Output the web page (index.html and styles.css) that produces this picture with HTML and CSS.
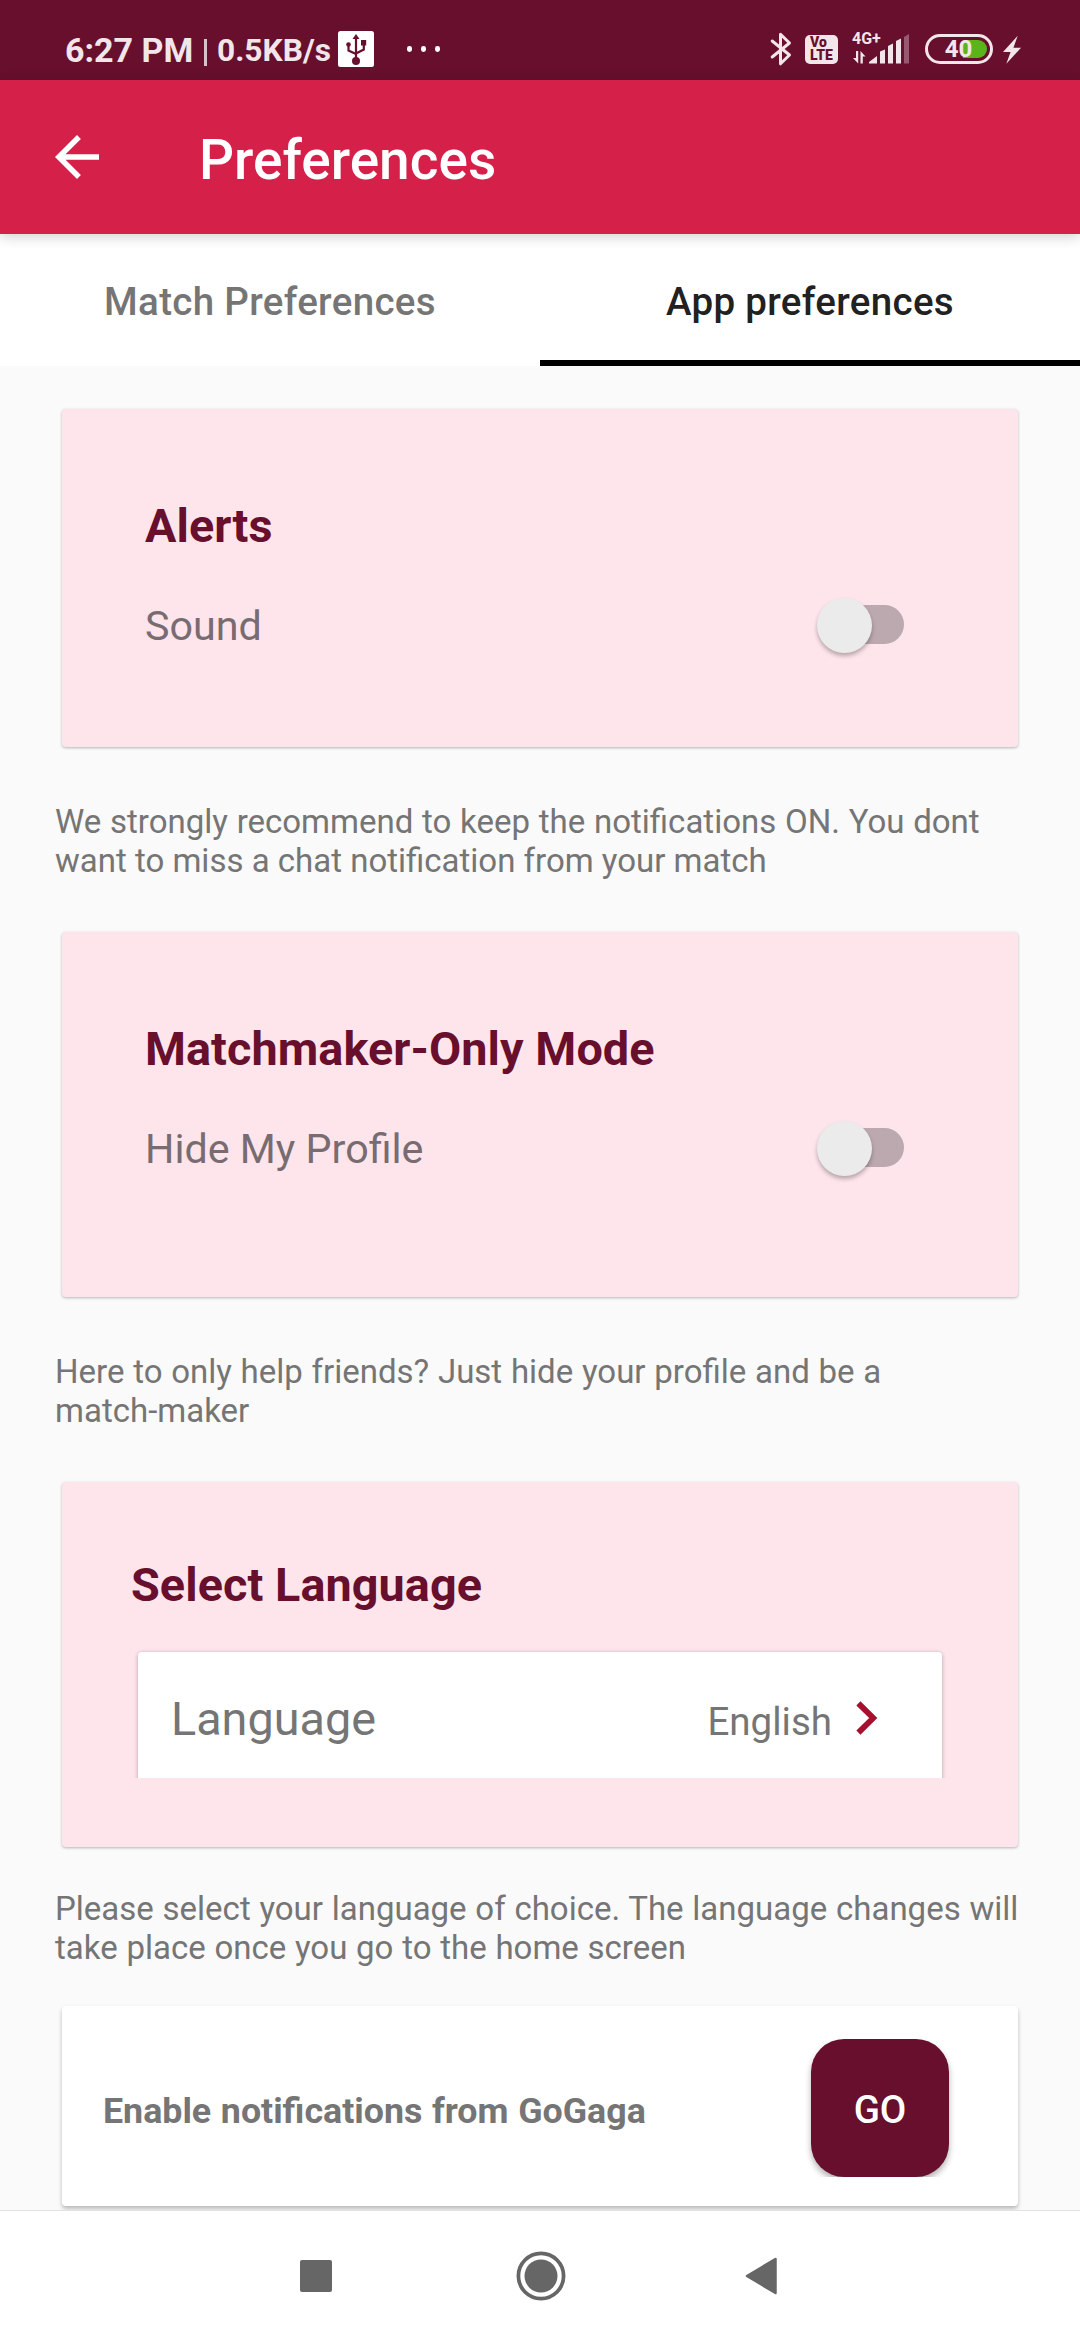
FILE: index.html
```html
<!DOCTYPE html>
<html lang="en">
<head>
<meta charset="utf-8">
<title>Preferences</title>
<link rel="stylesheet" href="styles.css">
</head>
<body>
<div class="screen">
  <header class="status">
    <div class="status-left">
      <span class="clock">6:27 PM</span>
      <span class="divider"></span>
      <span class="speed">0.5KB/s</span>
      <svg class="usb" width="36" height="36" viewBox="0 0 36 36">
        <rect width="36" height="36" rx="2.5" fill="#fff"/>
        <g fill="none" stroke="#670f2d" stroke-width="2.2">
          <path d="M18 7v23M10.500 13v6.500l7.500 3.500M25.800 13v5.500L18 22.500"/>
        </g>
        <g fill="#670f2d"><path d="M18 3l3.500 5h-7z"/><circle cx="18" cy="30" r="4"/><circle cx="10.500" cy="13.500" r="2.300"/><path d="M23 9h5.200v5.500H23z"/></g>
      </svg>
      <svg class="more" width="34" height="6" viewBox="0 0 34 6" fill="#fff"><rect width="5" height="6" rx="2.400"/><rect x="14" width="5" height="6" rx="2.400"/><rect x="28" width="5" height="6" rx="2.400"/></svg>
    </div>
    <div class="status-right">
      <svg class="bluetooth" width="22" height="34" viewBox="0 0 22 34" fill="none" stroke="#f2e6ea" stroke-width="3" stroke-linejoin="round" stroke-linecap="round"><path d="M2.200 9l17.300 14L10.500 31.800V2.200L19.500 11 2.200 25"/></svg>
      <span class="volte"><span>Vo</span><span>LTE</span></span>
      <div class="network">
        <span class="net-type">4G+</span>
        <svg width="58" height="30" viewBox="0 0 58 30" fill="#f2e6ea">
          <path d="M4 17h2.200v12.500L1 24h3zM8.500 29.500V17l5 5.500h-2.700v7z"/>
          <path d="M17 29.500v-1.500l8-6v7.500zM28 17.500l5-2v14h-5zM36 12l5-2.500v20h-5zM44 7l5-2.500v25h-5z"/>
          <path opacity=".35" d="M52 3l5-3v29.500h-5z"/>
        </svg>
      </div>
      <span class="battery"><span class="charge"></span><span class="level">40</span></span>
      <svg class="bolt" width="20" height="30" viewBox="0 0 20 30" fill="#f2e6ea"><path d="M15.500 0L0 17h8L3.500 29.500 19 12.500h-8z"/></svg>
    </div>
  </header>

  <div class="appbar">
    <svg class="back" width="66" height="66" viewBox="0 0 24 24" fill="#fff"><path d="M20 11H7.830l5.590-5.590L12 4l-8 8 8 8 1.410-1.410L7.830 13H20v-2z"/></svg>
    <h1>Preferences</h1>
  </div>

  <nav class="tabs">
    <a class="tab">Match Preferences</a>
    <a class="tab active">App preferences</a>
  </nav>

  <main>
    <section class="card alerts">
      <h2>Alerts</h2>
      <div class="row"><span class="label">Sound</span><span class="switch"><span class="thumb"></span></span></div>
    </section>
    <p><span class="wide">We strongly recommend to keep the notifications ON. You dont</span><br>want to miss a chat notification from your match</p>

    <section class="card mode">
      <h2>Matchmaker-Only Mode</h2>
      <div class="row"><span class="label">Hide My Profile</span><span class="switch"><span class="thumb"></span></span></div>
    </section>
    <p><span class="wide">Here to only help friends? Just hide your profile and be a</span><br>match-maker</p>

    <section class="card language">
      <h2>Select Language</h2>
      <div class="picker-clip">
        <div class="picker">
          <span class="picker-label">Language</span>
          <span class="picker-value">English</span>
          <svg width="22" height="34" viewBox="0 0 22 34" fill="none" stroke="#a80e2d" stroke-width="5.800"><path d="M2.400 2.400L17.200 17l-14.800 14.600"/></svg>
        </div>
      </div>
    </section>
    <p class="language-note"><span class="wide">Please select your language of choice. The language changes will<br>take place once you go to the home screen</span></p>

    <section class="card notify">
      <span class="notify-text">Enable notifications from GoGaga</span>
      <div class="go-clip"><button class="go">GO</button></div>
    </section>
  </main>

  <footer class="navbar">
    <svg width="32" height="32" viewBox="0 0 32 32"><rect width="32" height="32" rx="2" fill="#666"/></svg>
    <svg width="50" height="50" viewBox="0 0 50 50"><circle cx="25" cy="25" r="22.600" fill="none" stroke="#666" stroke-width="3.800"/><circle cx="25" cy="25" r="16.500" fill="#666"/></svg>
    <svg width="32" height="38" viewBox="0 0 32 38"><path d="M30.500 2L2 19l28.500 17z" fill="#666" stroke="#666" stroke-width="2.500" stroke-linejoin="round"/></svg>
  </footer>
</div>
</body>
</html>
```

FILE: styles.css
```css
* { box-sizing: border-box; }

body {
  margin: 0;
  font-family: Roboto, "Noto Sans", sans-serif;
  background: #fafafa;
}

svg { display: block; flex: none; }

h1, h2, p { margin: 0; }

.screen {
  width: 1080px;
  height: 2340px;
  display: flex;
  flex-direction: column;
  overflow: hidden;
}

/* Status bar */
.status {
  height: 80px;
  flex: none;
  display: flex;
  justify-content: space-between;
  padding: 31px 58px 0 65px;
  background: #670f2d;
  color: #f2e6ea;
}

.status-left, .status-right { display: flex; align-items: flex-start; }

.clock {
  width: 139px;
  padding-top: 1px;
  font-size: 34px;
  font-weight: 700;
  line-height: 36px;
  white-space: nowrap;
}

.divider { width: 3px; height: 27px; margin-top: 8px; background: #d9c3cb; }

.speed {
  width: 122px;
  margin-left: 10px;
  padding-top: 2px;
  font-size: 31.7px;
  font-weight: 700;
  line-height: 36px;
  white-space: nowrap;
}

.usb { margin-left: -1px; }
.more { margin: 15px 0 0 33px; }
.bluetooth { margin-top: 1px; }

.volte {
  width: 33px;
  height: 29px;
  margin: 4px 0 0 13px;
  padding: 1px 0 0 5px;
  border-radius: 5px;
  background: #f2e6ea;
  color: #670f2d;
  display: flex;
  flex-direction: column;
  font-size: 14px;
  font-weight: 900;
  line-height: 13.3px;
}

.network { position: relative; margin: 3px 0 0 14px; }
.network svg { width: 58px; }
.net-type {
  position: absolute;
  left: 0;
  top: -4px;
  font-size: 16px;
  font-weight: 700;
  line-height: 18px;
}

.battery {
  position: relative;
  width: 68px;
  height: 30px;
  margin: 3px 0 0 15px;
  border: 3px solid #f2e6ea;
  border-radius: 15px;
  text-align: center;
}

.charge {
  position: absolute;
  top: 3px;
  right: 3px;
  width: 24px;
  height: 18px;
  border-radius: 0 9px 9px 0;
  background: #5ab51b;
}

.level {
  position: relative;
  font-size: 24px;
  font-weight: 700;
  line-height: 24px;
  display: block;
  padding-right: 1px;
}

.bolt { margin: 4px 0 0 10px; width: 19px; }

/* App bar */
.appbar {
  position: relative;
  height: 154px;
  flex: none;
  display: flex;
  align-items: center;
  padding-left: 44px;
  background: #d52149;
  color: #fff;
  box-shadow: 0 3px 12px rgba(0, 0, 0, .18);
}

.appbar h1 {
  margin: 6px 0 0 89px;
  font-size: 55px;
  font-weight: 500;
  line-height: 64px;
}

/* Tabs */
.tabs { height: 132px; flex: none; display: flex; background: #fff; }

.tab {
  flex: 1;
  padding-top: 45px;
  border-bottom: 6px solid transparent;
  text-align: center;
  font-size: 38.5px;
  font-weight: 500;
  line-height: 45px;
  letter-spacing: .32px;
  color: #757575;
}

.tab.active { border-color: #000; color: #212121; }

/* Content */
main { flex: 1; min-height: 0; overflow: hidden; padding-top: 43px; }

.card {
  width: 956px;
  margin-left: 62px;
  border-radius: 4px;
  background: #fee5ec;
  box-shadow: 0 1px 3px rgba(0, 0, 0, .28);
}

.card h2 {
  font-size: 46.75px;
  font-weight: 700;
  line-height: 56px;
  letter-spacing: .08px;
  color: #670f2d;
}

.alerts, .mode { padding: 89px 114px 0 83px; }
.alerts { height: 338px; }
.mode { height: 365px; }
.language { height: 365px; padding: 75px 69px 0 69px; }

.row {
  height: 48px;
  margin-top: 47px;
  display: flex;
  justify-content: space-between;
  align-items: center;
  font-size: 41.25px;
  line-height: 48px;
  color: #786c70;
}

.label { padding-top: 2px; }

.switch {
  width: 78px;
  height: 39px;
  margin-bottom: 1px;
  border-radius: 19.5px;
  background: #bca9af;
}

.thumb {
  display: block;
  width: 55px;
  height: 55px;
  margin: -7px 0 0 -9px;
  border-radius: 50%;
  background: #ebebeb;
  box-shadow: 0 3px 4px rgba(0, 0, 0, .28);
}

main p {
  margin: 55px 0 52px 55px;
  font-size: 33px;
  line-height: 39px;
  color: #757575;
  white-space: nowrap;
}

.wide { word-spacing: .55px; }

main .language-note { margin: 42px 0 39px 55px; }

.picker-clip {
  height: 132px;
  margin-top: 33px;
  padding: 6px 7px 0;
  overflow: hidden;
}

.picker {
  height: 136px;
  display: flex;
  padding: 49px 64px 0 33px;
  border-radius: 4px;
  background: #fff;
  box-shadow: 0 1px 4px rgba(0, 0, 0, .3);
  color: #757575;
}

.picker-label {
  flex: 1;
  margin-top: -9px;
  font-size: 46.75px;
  line-height: 55px;
}
.picker-value { margin: -2px 24px 0 0; font-size: 38.5px; line-height: 45px; }

.notify {
  height: 200px;
  display: flex;
  padding: 33px 61px 0 41px;
  background: #fff;
  box-shadow: 0 3px 4px rgba(0, 0, 0, .25);
}

.notify-text {
  flex: 1;
  margin-top: 51px;
  font-size: 35.75px;
  font-weight: 700;
  line-height: 42px;
  word-spacing: .8px;
  color: #757575;
}

.go-clip { width: 154px; height: 138px; padding: 0 8px; overflow: hidden; }

.go {
  width: 138px;
  height: 138px;
  padding: 2px 0 0;
  border: 0;
  border-radius: 33px;
  background: #670f2d;
  box-shadow: 0 4px 6px rgba(0, 0, 0, .3);
  color: #fff;
  font: 500 38.5px/45px Roboto, sans-serif;
}

/* System navigation */
.navbar {
  height: 130px;
  flex: none;
  display: flex;
  align-items: center;
  gap: 184px;
  padding-left: 300px;
  border-top: 1px solid #e2e2e2;
  background: #fff;
}

.navbar svg:last-child { margin-left: -5px; }
```
